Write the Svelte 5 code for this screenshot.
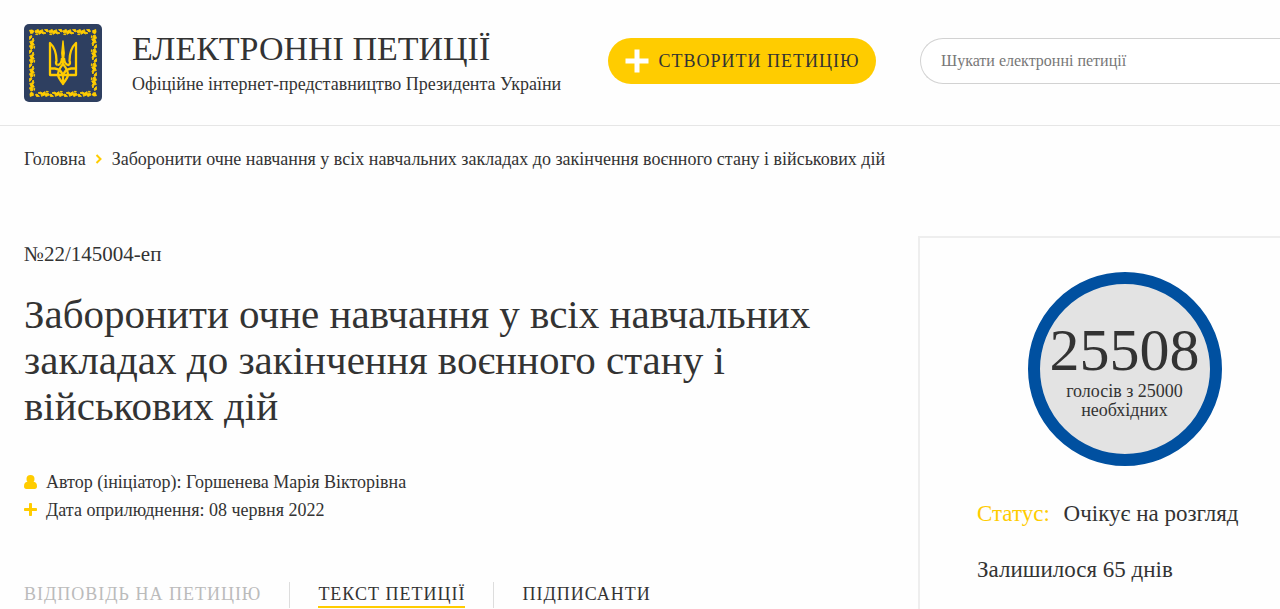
<script lang="ts">
	const tabs = [
		{ id: 'answer', label: 'Відповідь на петицію', disabled: true },
		{ id: 'text', label: 'Текст петиції', disabled: false },
		{ id: 'signers', label: 'Підписанти', disabled: false }
	];
	let activeTab = 'text';
	let query = '';

	// leaf motifs of the gold frame around the trident
	const steps = [11, 25, 39, 53];
</script>

<svelte:head>
	<title>Електронні петиції</title>
</svelte:head>

<header class="header">
	<a class="logo" href="/" aria-label="Головна">
		<svg width="78" height="78" viewBox="0 0 78 78">
			<defs>
				<g id="leaf" fill="#fc0" stroke="#fc0" stroke-width=".9" stroke-linejoin="round">
					<path d="M0 -.6 L3 -2 L4.500 -.6 L7.500 -1.800 L8 .6 L11 1.600 L8.500 2.400 L6.500 1.400 L4 2.800 L3.600 .8 L.8 1.600 Z" />
					<path d="M9.500 -1.800 L12.500 -2 L13.500 0 L12 .4 Z M.6 3 L2.400 2.200 L2.800 3.200 Z" />
				</g>
			</defs>
			<rect width="78" height="78" rx="5" fill="#2e3f60" />
			{#each [0, 90, 180, 270] as angle}
				<g transform={`rotate(${angle} 39 39)`}>
					<path d="M5 6 L8 5.500 L10.500 7 L9 9.500 L6.500 10 Z" fill="#fc0" />
					{#each steps as step}
						<use href="#leaf" x={step} y="7.500" />
					{/each}
				</g>
			{/each}
			<g fill="none" stroke="#fc0" stroke-width="2.300" stroke-linejoin="round">
				<path d="M33.500 41 C32 40.500 31.500 38.500 32.500 37 C32.500 30 31 23.500 26 19 V51 H52 V19 C47 23.500 45.500 30 45.500 37 C46.500 38.500 46 40.500 44.500 41 C42.500 41 40.500 39 40 34" />
				<path d="M38 34 C37.500 39 35.500 41 33.500 41 M26 44.500 H31 C34.500 45 38 47.500 39 52 C40 47.500 43.500 45 47 44.500 H52" />
				<path d="M39 40 C36.500 43 34 46 34 51 C34.500 55 37.500 57 39 60 C40.500 57 43.500 55 44 51 C44 46 41.500 43 39 40 Z M39 51 V59" />
				<path d="M39 17 L37.800 29 L39 41 L40.200 29 Z" fill="#fc0" stroke-width="1.400" />
			</g>
		</svg>
	</a>
	<div class="brand">
		<a class="brand-title" href="/">ЕЛЕКТРОННІ ПЕТИЦІЇ</a>
		<span class="brand-text">Офіційне інтернет-представництво Президента України</span>
	</div>
	<button class="create">
		<svg width="24" height="24" viewBox="0 0 24 24" aria-hidden="true">
			<path d="M9.500 0.500h5v9h9v5h-9v9h-5v-9h-9v-5h9z" fill="#fff" />
		</svg>
		Створити петицію
	</button>
	<input class="search" type="search" aria-label="Шукати електронні петиції" placeholder="Шукати електронні петиції" bind:value={query} />
</header>

<nav class="breadcrumbs" aria-label="Навігація">
	<a href="/">Головна</a>
	<svg width="8" height="10" viewBox="0 0 8 10" aria-hidden="true">
		<path d="M1.500 1l4 4-4 4" fill="none" stroke="#fc0" stroke-width="2" />
	</svg>
	<span>Заборонити очне навчання у всіх навчальних закладах до закінчення воєнного стану і військових дій</span>
</nav>

<div class="page">
	<main class="petition">
		<div class="number">№22/145004-еп</div>
		<h1>Заборонити очне навчання у всіх навчальних закладах до закінчення воєнного стану і військових дій</h1>
		<div class="meta">
			<svg width="13" height="14" viewBox="0 0 13 14" aria-hidden="true">
				<path d="M0 11.500C0 8.600 1 7 3.200 6.700h6.600C12 7 13 8.600 13 11.500c0 1.600-.9 2.500-2.300 2.500H2.300C.9 14 0 13.100 0 11.500z" fill="#fc0" />
				<circle cx="6.500" cy="4" r="4" fill="#fc0" />
			</svg>
			Автор (ініціатор): Горшенева Марія Вікторівна
		</div>
		<div class="meta">
			<svg width="13" height="14" viewBox="0 0 13 14" aria-hidden="true">
				<rect x="5" y="0" width="3" height="13" rx=".8" fill="#fc0" />
				<rect x="0" y="5" width="13" height="3" rx=".8" fill="#fc0" />
			</svg>
			Дата оприлюднення: 08 червня 2022
		</div>
		<div class="tabs">
			{#each tabs as tab}
				<div class="tab">
					<button class:active={activeTab === tab.id} disabled={tab.disabled} on:click={() => (activeTab = tab.id)}>
						{tab.label}
					</button>
				</div>
			{/each}
		</div>
	</main>

	<aside class="votes">
		<div class="ring">
			<strong>25508</strong>
			<span>голосів з 25000<br />необхідних</span>
		</div>
		<div class="status"><span>Статус:</span> Очікує на розгляд</div>
		<div class="status">Залишилося 65 днів</div>
	</aside>
</div>

<style>
	:global(body) {
		margin: 0;
		background: #fefefe;
		color: #333;
		font-family: 'Liberation Serif', serif;
		font-size: 18px;
	}

	a {
		color: inherit;
		text-decoration: none;
	}

	button {
		font-family: inherit;
		color: inherit;
		text-transform: uppercase;
		letter-spacing: 1px;
		white-space: nowrap;
		cursor: pointer;
	}

	.header {
		display: flex;
		align-items: center;
		padding: 24px 0 23px 24px;
		border-bottom: 1px solid #e6e6e6;
	}

	.logo,
	.logo svg {
		display: block;
	}

	.brand {
		display: flex;
		flex-direction: column;
		flex: 0 0 476px;
		margin-left: 30px;
		white-space: nowrap;
	}

	.brand-title {
		font-size: 34px;
		line-height: 42px;
	}

	.brand-text {
		line-height: 28px;
	}

	.create {
		display: flex;
		flex: 0 0 268px;
		align-items: center;
		justify-content: center;
		gap: 10px;
		height: 46px;
		margin-bottom: 4px;
		padding: 0;
		border: 0;
		border-radius: 23px;
		background: #fc0;
		font-size: 18px;
	}

	.search {
		flex: 1;
		min-width: 0;
		box-sizing: border-box;
		height: 46px;
		margin: 0 0 4px 44px;
		padding: 0 20px;
		border: 1px solid #d2d2d2;
		border-right: 0;
		border-radius: 23px 0 0 23px;
		background: #fff;
		font-family: inherit;
		font-size: 16px;
		appearance: none;
	}

	.search::placeholder {
		color: #777;
	}

	.breadcrumbs {
		display: flex;
		align-items: center;
		gap: 9px;
		padding: 22px 24px;
		line-height: 22px;
	}

	.page {
		display: flex;
		justify-content: space-between;
		padding: 44px 0 0 24px;
	}

	.petition {
		flex: 1;
		max-width: 860px;
	}

	.number {
		margin-top: 6px;
		font-size: 21px;
		line-height: 24px;
	}

	h1 {
		margin: 25px 0 39px;
		font-size: 41px;
		font-weight: normal;
		line-height: 46px;
	}

	.meta {
		display: flex;
		align-items: center;
		gap: 9px;
		line-height: 28px;
	}

	.tabs {
		display: flex;
		margin-top: 58px;
	}

	.tab {
		padding-right: 28px;
	}

	.tab + .tab {
		padding-left: 28px;
		border-left: 1px solid #ddd;
	}

	.tab button {
		padding: 0;
		border: 0;
		border-bottom: 2px solid transparent;
		background: none;
		font-size: 18px;
		line-height: 24px;
	}

	.tab button:disabled {
		color: #bbb;
		cursor: default;
	}

	.tab button.active {
		border-color: #fc0;
	}

	.votes {
		flex: 0 0 362px;
		box-sizing: border-box;
		padding: 34px 8px 0 57px;
		border: solid #eee;
		border-width: 2px 0 0 2px;
	}

	.ring {
		display: flex;
		flex-direction: column;
		align-items: center;
		justify-content: center;
		box-sizing: border-box;
		width: 194px;
		height: 194px;
		margin: 0 auto 32px;
		border: 12px solid #0050a0;
		border-radius: 50%;
		background: #e3e3e3;
		line-height: 19px;
		text-align: center;
	}

	.ring strong {
		font-size: 60px;
		font-weight: normal;
		line-height: 64px;
	}

	.status {
		font-size: 23px;
		line-height: 32px;
	}

	.status + .status {
		margin: 24px 0;
	}

	.status span {
		margin-right: 8px;
		color: #fc0;
	}
</style>
